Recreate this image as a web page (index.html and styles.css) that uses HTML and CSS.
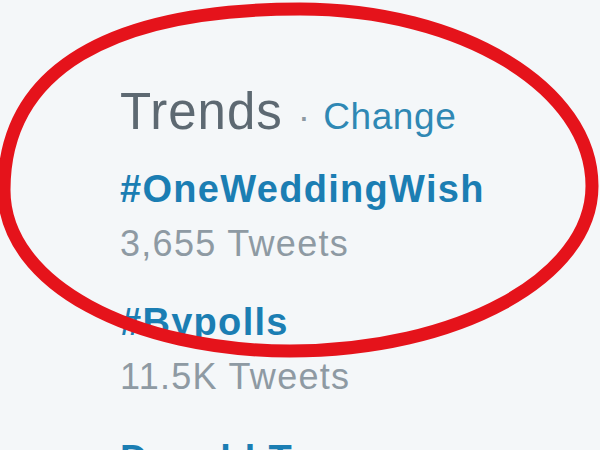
FILE: index.html
```html
<!DOCTYPE html>
<html>
<head>
<meta charset="utf-8">
<link rel="stylesheet" href="styles.css">
</head>
<body>
<div class="page">
  <div class="module">
    <div class="header">
      <span class="title">Trends</span>
      <span class="dot">·</span>
      <span class="change">Change</span>
    </div>
    <ul class="trends">
      <li class="trend">
        <div class="name">#OneWeddingWish</div>
        <div class="count">3,655 Tweets</div>
      </li>
      <li class="trend">
        <div class="name">#Bypolls</div>
        <div class="count">11.5K Tweets</div>
      </li>
      <li class="trend trend-last">
        <div class="name">Donald Trump</div>
      </li>
    </ul>
  </div>
  <svg class="circle" width="600" height="450" viewBox="0 0 600 450">
    <path d="M300 9 C 461 9, 592 88, 592 186 C 592 278, 457 351, 290 351 C 135 351, 4 285, 4 190 C 4 70, 110 9, 300 9 Z" fill="none" stroke="#e5131b" stroke-width="13"/>
  </svg>
</div>
</body>
</html>
```

FILE: styles.css
```css
html, body {
  margin: 0;
  padding: 0;
  background: #f4f7f9;
}
.page {
  position: relative;
  width: 600px;
  height: 450px;
  overflow: hidden;
  background: #f4f7f9;
  font-family: "Liberation Sans", Arial, sans-serif;
}
.module {
  padding: 82px 0 0 120px;
}
.header {
  display: flex;
  align-items: baseline;
  height: 60px;
  line-height: 60px;
}
.title {
  font-size: 51px;
  letter-spacing: 1px;
  color: #5d6972;
}
.dot {
  font-size: 37px;
  color: #8d99a2;
  margin-left: 15px;
}
.change {
  font-size: 37px;
  letter-spacing: 0.6px;
  color: #2f88b4;
  margin-left: 13px;
}
.trends {
  list-style: none;
  margin: 20px 0 0 0;
  padding: 0;
}
.trend {
  margin-bottom: 24px;
}
.trend-last {
  padding-top: 4px;
}
.name {
  font-size: 38px;
  font-weight: bold;
  letter-spacing: 1.3px;
  line-height: 54px;
  color: #1b7eb3;
}
.count {
  font-size: 36px;
  letter-spacing: 1.3px;
  line-height: 55px;
  color: #8e9aa3;
}
.circle {
  position: absolute;
  left: 0;
  top: 0;
}
```
